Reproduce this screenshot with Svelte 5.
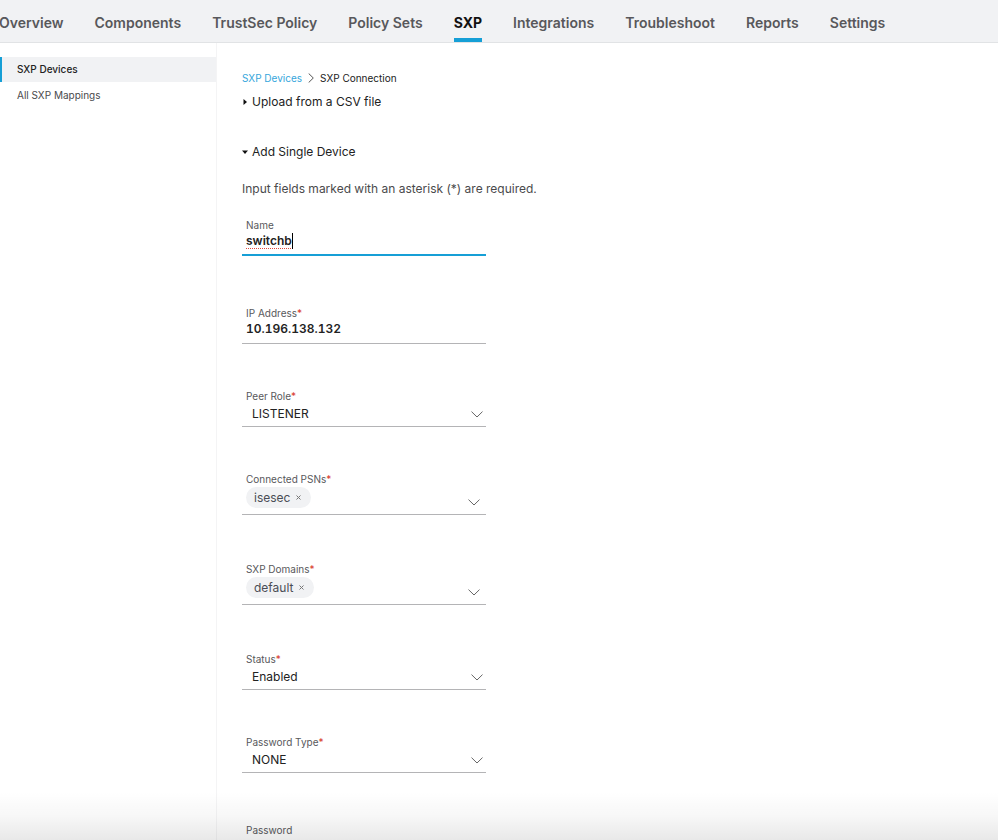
<script lang="ts">
	type Field = {
		id: string;
		label: string;
		kind: 'text' | 'select' | 'multi';
		value: string;
		required?: boolean;
		editing?: boolean;
		options?: string[];
	};

	const tabs = [
		'Overview',
		'Components',
		'TrustSec Policy',
		'Policy Sets',
		'SXP',
		'Integrations',
		'Troubleshoot',
		'Reports',
		'Settings'
	];
	const pages = ['SXP Devices', 'All SXP Mappings'];

	let activeTab = $state('SXP');
	let activePage = $state('SXP Devices');
	let uploadOpen = $state(false);
	let singleOpen = $state(true);

	let fields = $state<Field[]>([
		{ id: 'name', label: 'Name', kind: 'text', value: 'switchb', editing: true },
		{ id: 'ip', label: 'IP Address', kind: 'text', value: '10.196.138.132', required: true },
		{
			id: 'role',
			label: 'Peer Role',
			kind: 'select',
			value: 'LISTENER',
			required: true,
			options: ['LISTENER', 'SPEAKER', 'BOTH']
		},
		{ id: 'psns', label: 'Connected PSNs', kind: 'multi', value: 'isesec', required: true },
		{ id: 'domains', label: 'SXP Domains', kind: 'multi', value: 'default', required: true },
		{
			id: 'status',
			label: 'Status',
			kind: 'select',
			value: 'Enabled',
			required: true,
			options: ['Enabled', 'Disabled']
		},
		{
			id: 'pwtype',
			label: 'Password Type',
			kind: 'select',
			value: 'NONE',
			required: true,
			options: ['NONE', 'CUSTOM', 'DEFAULT']
		},
		{ id: 'password', label: 'Password', kind: 'text', value: '' }
	]);
</script>

{#snippet chevron()}
	<svg class="chevron" viewBox="0 0 12 7" aria-hidden="true">
		<path d="M0.5 0.6 L6 6 L11.5 0.6" />
	</svg>
{/snippet}

{#snippet caption(field: Field)}
	{field.label}{#if field.required}<span class="star">*</span>{/if}
{/snippet}

<div class="app">
	<header>
		<nav class="tabs" aria-label="Work center">
			{#each tabs as tab (tab)}
				<a
					href="#{tab}"
					class:active={tab === activeTab}
					onclick={() => (activeTab = tab)}>{tab}</a
				>
			{/each}
		</nav>
	</header>

	<div class="body">
		<nav class="sidebar" aria-label="SXP">
			{#each pages as page (page)}
				<a
					href="#{page}"
					class:active={page === activePage}
					onclick={() => (activePage = page)}>{page}</a
				>
			{/each}
		</nav>

		<main>
			<div class="crumbs">
				<a href="#devices">SXP Devices</a>
				<svg viewBox="0 0 6 10" aria-hidden="true"><path d="M0.7 0.5 L5.3 5 L0.7 9.5" /></svg>
				<span>SXP Connection</span>
			</div>

			<button
				class="toggle"
				aria-expanded={uploadOpen}
				onclick={() => (uploadOpen = !uploadOpen)}
			>
				<svg class:open={uploadOpen} viewBox="0 0 6 6" aria-hidden="true">
					<path d="M1.5 0 L5 3 L1.5 6 Z" />
				</svg>
				Upload from a CSV file
			</button>

			<button
				class="toggle toggle--single"
				aria-expanded={singleOpen}
				onclick={() => (singleOpen = !singleOpen)}
			>
				<svg class:open={singleOpen} viewBox="0 0 6 6" aria-hidden="true">
					<path d="M1.5 0 L5 3 L1.5 6 Z" />
				</svg>
				Add Single Device
			</button>

			{#if singleOpen}
				<p class="note">Input fields marked with an asterisk (*) are required.</p>

				<form>
					{#each fields as field (field.id)}
						<div class="field field--{field.kind}" class:editing={field.editing}>
							{#if field.kind === 'multi'}
								<span class="label" id="{field.id}-label">{@render caption(field)}</span>
								<div class="multi" role="group" aria-labelledby="{field.id}-label">
									{#if field.value}
										<span class="chip">
											{field.value}
											<button
												type="button"
												aria-label="Remove {field.value}"
												onclick={() => (field.value = '')}
											>
												<svg viewBox="0 0 5 5" aria-hidden="true">
													<path d="M0.5 0.5 L4.5 4.5 M4.5 0.5 L0.5 4.5" />
												</svg>
											</button>
										</span>
									{/if}
									<button type="button" class="expand" aria-label="Show {field.label}">
										{@render chevron()}
									</button>
								</div>
							{:else}
								<label class="label" for={field.id}>{@render caption(field)}</label>
								<div class="control">
									{#if field.kind === 'select'}
										<select id={field.id} bind:value={field.value}>
											{#each field.options ?? [] as option (option)}
												<option>{option}</option>
											{/each}
										</select>
										{@render chevron()}
									{:else}
										<input
											id={field.id}
											type="text"
											autocomplete="off"
											spellcheck="false"
											bind:value={field.value}
										/>
										{#if field.editing}
											<span class="spelling" aria-hidden="true">{field.value}</span>
										{/if}
									{/if}
								</div>
							{/if}
						</div>
					{/each}
				</form>
			{/if}
		</main>
	</div>

	<div class="fade"></div>
</div>

<style>
	:global(body) {
		margin: 0;
		background: #fff;
	}
	.app {
		position: relative;
		display: flex;
		flex-direction: column;
		height: 100vh;
		overflow: hidden;
		font-family: Inter, 'Liberation Sans', sans-serif;
		font-size: 12px;
		color: #222;
	}
	button,
	input,
	select {
		margin: 0;
		padding: 0;
		border: 0;
		background: none;
		font: inherit;
		color: inherit;
		outline: none;
	}
	button {
		cursor: pointer;
	}
	a {
		text-decoration: none;
	}
	svg {
		display: block;
		flex: none;
	}

	header {
		flex: none;
		background: #f1f2f4;
		border-bottom: 1px solid #e1e3e5;
	}
	.tabs {
		display: flex;
		gap: 31px;
		height: 42px;
		margin-left: -1px;
	}
	.tabs a {
		box-sizing: border-box;
		padding-top: 13px;
		border-bottom: 4px solid transparent;
		font-size: 14px;
		line-height: 20px;
		font-weight: 600;
		white-space: nowrap;
		color: #58585b;
	}
	.tabs a.active {
		border-color: #169fd6;
		font-weight: 700;
		color: #111;
	}

	.body {
		flex: 1;
		display: flex;
		min-height: 0;
	}
	.sidebar {
		flex: none;
		display: flex;
		flex-direction: column;
		gap: 1px;
		box-sizing: border-box;
		width: 217px;
		padding-top: 14px;
		border-right: 1px solid #f4f4f5;
	}
	.sidebar a {
		padding-left: 15px;
		border-left: 2px solid transparent;
		font-size: 10px;
		line-height: 25px;
		color: #4a4a4c;
	}
	.sidebar a.active {
		border-color: #169fd6;
		background: #f1f2f4;
		font-weight: 500;
		color: #222;
	}

	main {
		flex: 1;
		min-width: 0;
		overflow-y: auto;
		scrollbar-width: none;
		padding: 26px 25px 40px;
	}
	.crumbs {
		display: flex;
		align-items: center;
		gap: 6px;
		margin-bottom: 6px;
		font-size: 10px;
		line-height: 18px;
	}
	.crumbs a {
		color: #36a6dc;
	}
	.crumbs svg {
		width: 6px;
		height: 10px;
		fill: none;
		stroke: #555;
	}
	.toggle {
		display: flex;
		align-items: center;
		gap: 4px;
		line-height: 18px;
	}
	.toggle svg {
		width: 6px;
		height: 6px;
		fill: #111;
	}
	.toggle svg.open {
		transform: rotate(90deg);
	}
	.toggle--single {
		margin-top: 32px;
	}
	.note {
		margin: 19px 0;
		line-height: 18px;
		color: #4a4a4c;
	}

	.field {
		width: 244px;
		max-width: 100%;
		margin-top: 44px;
	}
	.field--text {
		margin-top: 49px;
	}
	.field:first-child {
		margin-top: 0;
	}
	.field--multi + .field {
		margin-top: 46px;
	}
	.label {
		display: block;
		padding-left: 4px;
		font-size: 10px;
		line-height: 16px;
		color: #58585b;
	}
	.star {
		color: #d8392b;
	}
	.control {
		position: relative;
		box-sizing: border-box;
		height: 23px;
		border-bottom: 1px solid #b4b4b6;
	}
	.editing .control {
		border-bottom: 2px solid #169fd6;
	}
	input,
	.spelling {
		box-sizing: border-box;
		font-size: 12px;
		line-height: 16px;
		font-weight: 600;
		font-variant-numeric: tabular-nums;
	}
	input {
		display: block;
		width: 100%;
		height: 16px;
		padding: 0 4px;
		caret-color: transparent;
	}
	/* Spell-check underline and caret laid over the input's own text */
	.spelling {
		position: absolute;
		top: 0;
		left: 4px;
		border-right: 1px solid #000;
		color: transparent;
		text-decoration: underline dotted #e0483c 1px;
		text-underline-offset: 3px;
		pointer-events: none;
	}
	select {
		display: block;
		width: 100%;
		height: 18px;
		padding: 0 20px 0 10px;
		appearance: none;
	}
	.chevron {
		width: 12px;
		height: 7px;
		fill: none;
		stroke: #666;
	}
	.control .chevron {
		position: absolute;
		top: 7px;
		right: 3px;
		pointer-events: none;
	}
	.multi {
		display: flex;
		align-items: flex-start;
		justify-content: space-between;
		padding: 0 6px 6px 4px;
		border-bottom: 1px solid #b4b4b6;
	}
	.chip {
		display: flex;
		align-items: center;
		gap: 6px;
		padding: 0 10px 0 8px;
		border-radius: 11px;
		background: #f1f2f4;
		line-height: 21px;
		color: #4a4d55;
	}
	.chip svg {
		width: 5px;
		height: 5px;
		fill: none;
		stroke: #777;
	}
	.expand {
		margin-left: auto;
		padding-top: 12px;
	}

	.fade {
		position: absolute;
		right: 0;
		bottom: 0;
		left: 0;
		height: 48px;
		background: linear-gradient(
			to bottom,
			transparent,
			rgba(0, 0, 0, 0.03) 50%,
			rgba(0, 0, 0, 0.09)
		);
		pointer-events: none;
	}
</style>
